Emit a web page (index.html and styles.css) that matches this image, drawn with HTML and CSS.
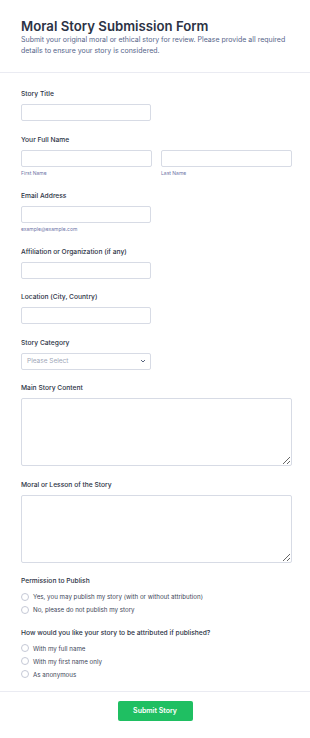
FILE: index.html
```html
<!DOCTYPE html>
<html lang="en">
<head>
    <meta charset="UTF-8">
    <meta name="viewport" content="width=device-width, initial-scale=1.0">
    <title>Moral Story Submission Form</title>
    <link rel="stylesheet" href="styles.css">
</head>
<body>
    <div class="form-header">
        <h1>Moral Story Submission Form</h1>
        <p>Submit your original moral or ethical story for review. Please provide all required details to ensure your story is considered.</p>
    </div>

    <form class="form-body">
        <div class="field">
            <label>Story Title</label>
            <input type="text" class="input-short">
        </div>

        <div class="field">
            <label>Your Full Name</label>
            <div class="name-row">
                <div class="name-col">
                    <input type="text">
                    <span class="sublabel">First Name</span>
                </div>
                <div class="name-col">
                    <input type="text">
                    <span class="sublabel">Last Name</span>
                </div>
            </div>
        </div>

        <div class="field">
            <label>Email Address</label>
            <input type="text" class="input-short">
            <span class="sublabel">example@example.com</span>
        </div>

        <div class="field">
            <label>Affiliation or Organization (if any)</label>
            <input type="text" class="input-short">
        </div>

        <div class="field">
            <label>Location (City, Country)</label>
            <input type="text" class="input-short">
        </div>

        <div class="field">
            <label>Story Category</label>
            <div class="select">
                <span>Please Select</span>
                <svg width="6" height="4" viewBox="0 0 6 4"><path d="M1 1 L3 3 L5 1" fill="none" stroke="#57647e" stroke-width="1"/></svg>
            </div>
        </div>

        <div class="field">
            <label>Main Story Content</label>
            <textarea></textarea>
        </div>

        <div class="field">
            <label>Moral or Lesson of the Story</label>
            <textarea></textarea>
        </div>

        <div class="field field-tight">
            <label>Permission to Publish</label>
            <div class="radio"><span class="circle"></span>Yes, you may publish my story (with or without attribution)</div>
            <div class="radio"><span class="circle"></span>No, please do not publish my story</div>
        </div>

        <div class="field">
            <label>How would you like your story to be attributed if published?</label>
            <div class="radio"><span class="circle"></span>With my full name</div>
            <div class="radio"><span class="circle"></span>With my first name only</div>
            <div class="radio"><span class="circle"></span>As anonymous</div>
        </div>
    </form>

    <div class="form-footer">
        <button type="button">Submit Story</button>
    </div>
</body>
</html>
```

FILE: styles.css
```css
body {
    font-family: Inter, 'Liberation Sans', sans-serif;
    background: #fff;
    color: #2c3345;
    margin: 0;
}
.form-header {
    padding: 17px 21px 16px;
    border-bottom: 1px solid #eaebf2;
}
h1 {
    font-size: 13.2px;
    line-height: 18px;
    font-weight: 600;
    margin: 0;
    color: #2c3345;
}
.form-header p {
    font-size: 7px;
    line-height: 10.5px;
    margin: 0;
    color: #56658a;
}
.form-body {
    padding: 17px 18px 10px 21px;
}
.field {
    display: flex;
    flex-direction: column;
    align-items: flex-start;
    margin-bottom: 14.5px;
}
.field-tight {
    margin-bottom: 12.5px;
}
.field:last-child {
    margin-bottom: 0;
}
label {
    font-size: 6.7px;
    line-height: 9px;
    font-weight: 500;
    margin-bottom: 5px;
}
input[type="text"] {
    box-sizing: border-box;
    height: 17px;
    width: 100%;
    border: 1px solid #d7dbe5;
    border-radius: 2px;
    margin: 0;
    padding: 0 5px;
    outline: none;
}
.input-short {
    width: 130px !important;
}
.name-row {
    display: flex;
    gap: 9px;
    width: 100%;
}
.name-col {
    flex: 1;
    display: flex;
    flex-direction: column;
}
.sublabel {
    font-size: 5px;
    line-height: 7px;
    margin-top: 3.5px;
    color: #6f76a7;
}
.select {
    box-sizing: border-box;
    width: 130px;
    height: 17px;
    border: 1px solid #d7dbe5;
    border-radius: 2px;
    display: flex;
    align-items: center;
    justify-content: space-between;
    padding: 0 4px 0 5px;
    font-size: 6.5px;
    color: #a0a6b7;
}
textarea {
    box-sizing: border-box;
    width: 100%;
    height: 68px;
    border: 1px solid #d7dbe5;
    border-radius: 2px;
    margin: 0;
    resize: vertical;
}
.radio {
    display: flex;
    align-items: center;
    height: 13px;
    font-size: 6.2px;
    color: #3d4558;
}
.radio:first-of-type {
    margin-top: -1px;
}
.circle {
    box-sizing: border-box;
    width: 8px;
    height: 8px;
    border: 1px solid #c5c9d6;
    border-radius: 50%;
    margin-right: 4px;
}
.form-footer {
    border-top: 1px solid #eaebf2;
    padding: 9px 0 16px;
    display: flex;
    justify-content: center;
}
button {
    width: 75px;
    height: 20px;
    background: #1fbf62;
    color: white;
    border: none;
    border-radius: 2px;
    font-family: Inter, sans-serif;
    font-size: 7px;
    font-weight: 600;
    cursor: pointer;
}
```
